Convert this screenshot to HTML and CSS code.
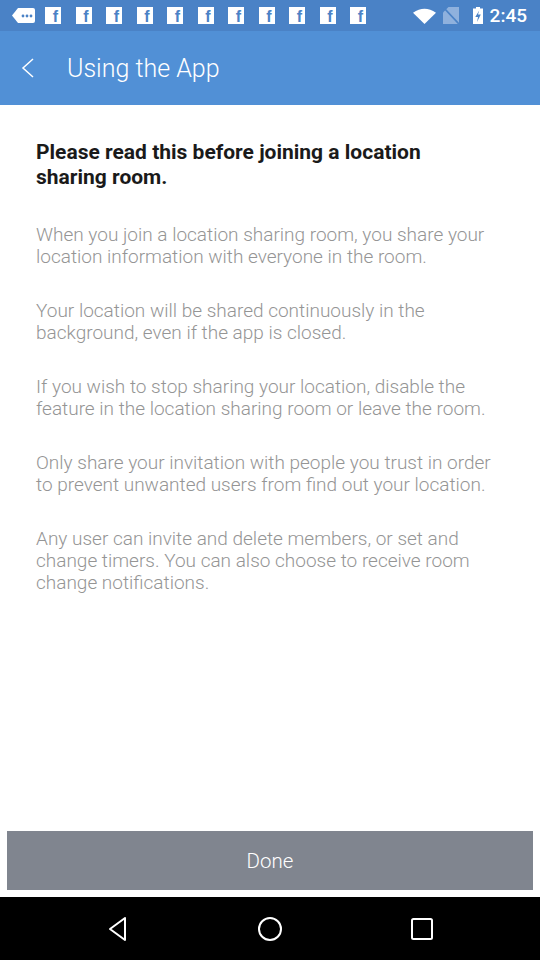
FILE: index.html
```html
<!DOCTYPE html>
<html>
<head>
<meta charset="utf-8">
<link rel="stylesheet" href="styles.css">
</head>
<body>
<div class="screen">
  <div class="status">
    <div class="status-left">
      <svg class="msg" width="23" height="15" viewBox="0 0 23 15"><path d="M6 0H21a2 2 0 0 1 2 2V13a2 2 0 0 1-2 2H6L0 7.5Z" fill="#fff"/><circle cx="11" cy="8" r="1.4" fill="#4a82c6"/><circle cx="15" cy="8" r="1.4" fill="#4a82c6"/><circle cx="19" cy="8" r="1.4" fill="#4a82c6"/></svg>
      <span class="fb">f</span><span class="fb">f</span><span class="fb">f</span><span class="fb">f</span><span class="fb">f</span><span class="fb">f</span><span class="fb">f</span><span class="fb">f</span><span class="fb">f</span><span class="fb">f</span><span class="fb">f</span>
    </div>
    <div class="status-right">
      <svg class="wifi" width="23" height="16" viewBox="0 0 23 16"><path d="M0 4.8Q11.5 -3.2 23 4.8L11.5 16Z" fill="#fff"/></svg>
      <svg class="sim" width="16" height="17" viewBox="0 0 16 17"><path d="M0 17V5.5L5.5 0H16V17Z" fill="#8fb1dd"/><path d="M1 1L16 17" stroke="#4a82c6" stroke-width="1.8"/></svg>
      <svg class="batt" width="10" height="17" viewBox="0 0 10 17"><rect x="3" y="0" width="4" height="2" fill="#fff"/><rect x="0" y="1.5" width="10" height="15.5" fill="#fff"/><path d="M6.2 3.5L2.3 10H5L4 15L7.8 7.5H5Z" fill="#4a82c6"/></svg>
      <span class="time">2:45</span>
    </div>
  </div>
  <div class="appbar">
    <svg class="back" width="14" height="20" viewBox="0 0 14 20"><path d="M12 1L2 10L12 19" fill="none" stroke="#fff" stroke-width="1.5"/></svg>
    <span class="title">Using the App</span>
  </div>
  <div class="content">
    <h1 class="headline">Please read this before joining a location sharing room.</h1>
    <p class="para">When you join a location sharing room, you share your location information with everyone in the room.</p>
    <p class="para">Your location will be shared continuously in the background, even if the app is closed.</p>
    <p class="para">If you wish to stop sharing your location, disable the feature in the location sharing room or leave the room.</p>
    <p class="para">Only share your invitation with people you trust in order to prevent unwanted users from find out your location.</p>
    <p class="para">Any user can invite and delete members, or set and change timers. You can also choose to receive room change notifications.</p>
  </div>
  <div class="footer">
    <div class="done">Done</div>
  </div>
  <div class="navbar">
    <svg width="24" height="26" viewBox="0 0 24 26"><path d="M19 2L4 13L19 24Z" fill="none" stroke="#fff" stroke-width="2" stroke-linejoin="round"/></svg>
    <svg width="26" height="26" viewBox="0 0 26 26"><circle cx="13" cy="13" r="11" fill="none" stroke="#fff" stroke-width="2"/></svg>
    <svg width="24" height="24" viewBox="0 0 24 24"><rect x="2" y="2" width="20" height="20" rx="1.5" fill="none" stroke="#fff" stroke-width="2"/></svg>
  </div>
</div>
</body>
</html>
```
FILE: styles.css
```css
* { box-sizing: border-box; }
html, body { margin: 0; padding: 0; }
body { font-family: Roboto, "Noto Sans", sans-serif; background: #fff; }
.screen { width: 540px; height: 960px; display: flex; flex-direction: column; }
.status { height: 31px; background: #4a82c6; display: flex; align-items: center; justify-content: space-between; padding: 0 13px 0 12px; }
.status-left { display: flex; align-items: center; }
.msg { margin-right: 10px; }
.fb { width: 16px; height: 17px; background: #fff; color: #4a82c6; font-weight: 700; font-size: 16px; line-height: 20px; display: flex; justify-content: flex-end; padding-right: 3px; margin-right: 14.5px; overflow: hidden; font-family: "Liberation Sans", Arial, sans-serif; }
.status-right { display: flex; align-items: center; }
.wifi { margin-right: 7px; }
.sim { margin-right: 14px; }
.batt { margin-right: 7px; }
.time { color: #fff; font-size: 19px; font-weight: 500; }
.appbar { height: 74px; background: #5190d6; display: flex; align-items: center; padding-left: 21px; }
.back { margin-right: 32px; }
.title { color: #fff; font-size: 25px; font-weight: 300; }
.content { flex: 1; padding: 35px 46px 0 36px; }
.headline { margin: 0 0 34px; font-size: 21px; line-height: 25px; font-weight: 700; color: #1a1a1a; }
.para { margin: 0 0 32px; font-size: 19px; line-height: 22px; font-weight: 300; color: #959595; }
.footer { padding: 0 7px 7px; }
.done { height: 59px; background: #80858f; color: #fff; font-size: 20.5px; font-weight: 300; display: flex; align-items: center; justify-content: center; }
.navbar { height: 63px; background: #000; display: grid; grid-template-columns: repeat(3, 1fr); justify-items: center; align-items: center; padding: 0 42px; }
```
